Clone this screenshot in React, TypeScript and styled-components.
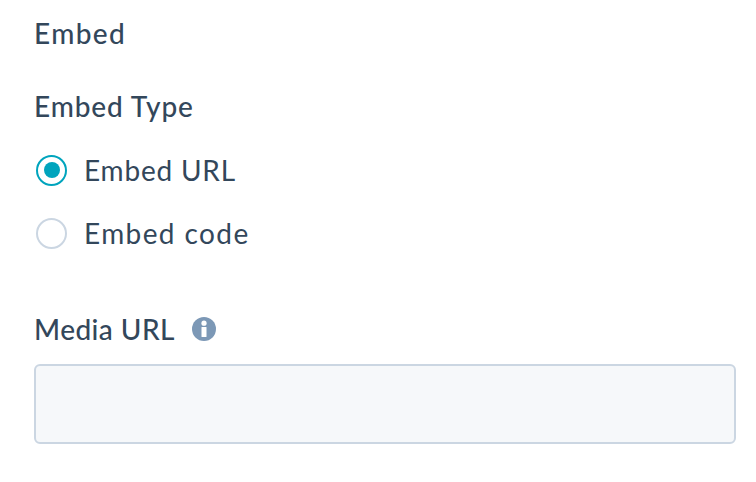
import React from "react";
import styled, { createGlobalStyle } from "styled-components";

const GlobalStyle = createGlobalStyle`
  html, body {
    margin: 0;
    background: #fff;
  }
  body {
    font-family: "Lato", "Liberation Sans", sans-serif;
    color: #33475b;
  }
`;

const Page = styled.div`
  width: 756px;
  height: 482px;
  box-sizing: border-box;
  padding: 14px 20px 0 34px;
  overflow: hidden;
`;

const Heading = styled.div<{ $tracking: number }>`
  font-size: 28px;
  line-height: 38px;
  font-weight: 500;
  letter-spacing: ${(p) => p.$tracking}px;
`;

const SectionLabel = styled(Heading)`
  margin-top: 35px;
`;

const RadioGroup = styled.div`
  display: flex;
  flex-direction: column;
  gap: 23px;
  margin-top: 25px;
  margin-bottom: 57px;
`;

const RadioRow = styled.label<{ $tracking: number }>`
  display: flex;
  align-items: center;
  gap: 17px;
  height: 40px;
  padding-left: 2px;
  font-size: 28px;
  font-weight: 400;
  letter-spacing: ${(p) => p.$tracking}px;
`;

const RadioCircle = styled.span<{ $checked?: boolean }>`
  box-sizing: border-box;
  width: 31px;
  height: 31px;
  border-radius: 50%;
  border: 2px solid ${(p) => (p.$checked ? "#00a4bd" : "#cbd6e2")};
  background: #fff;
  display: flex;
  align-items: center;
  justify-content: center;

  &::after {
    content: "";
    display: ${(p) => (p.$checked ? "block" : "none")};
    width: 16px;
    height: 16px;
    border-radius: 50%;
    background: #00a4bd;
  }
`;

const LabelRow = styled.div`
  display: flex;
  align-items: center;
  gap: 17px;
  height: 38px;
`;

const FieldLabel = styled.span`
  font-size: 28px;
  font-weight: 500;
  letter-spacing: 0.45px;
`;

const TextInput = styled.input`
  display: block;
  box-sizing: border-box;
  width: 702px;
  height: 80px;
  margin-top: 16px;
  border: 2px solid #cbd6e2;
  border-radius: 6px;
  background: #f6f8fa;
  outline: none;
`;

function InfoIcon() {
  return (
    <svg width="24" height="24" viewBox="0 0 24 24" aria-hidden="true">
      <circle cx="12" cy="12" r="12" fill="#7c98b6" />
      <circle cx="12" cy="6.2" r="2.6" fill="#fff" />
      <rect x="9.5" y="10" width="5" height="10" rx="0.5" fill="#fff" />
    </svg>
  );
}

export default function App() {
  return (
    <Page>
      <GlobalStyle />
      <Heading $tracking={1.4}>Embed</Heading>
      <SectionLabel $tracking={0.9}>Embed Type</SectionLabel>
      <RadioGroup>
        <RadioRow $tracking={0.8}>
          <RadioCircle $checked />
          Embed URL
        </RadioRow>
        <RadioRow $tracking={1.4}>
          <RadioCircle />
          Embed code
        </RadioRow>
      </RadioGroup>
      <LabelRow>
        <FieldLabel>Media URL</FieldLabel>
        <InfoIcon />
      </LabelRow>
      <TextInput />
    </Page>
  );
}
